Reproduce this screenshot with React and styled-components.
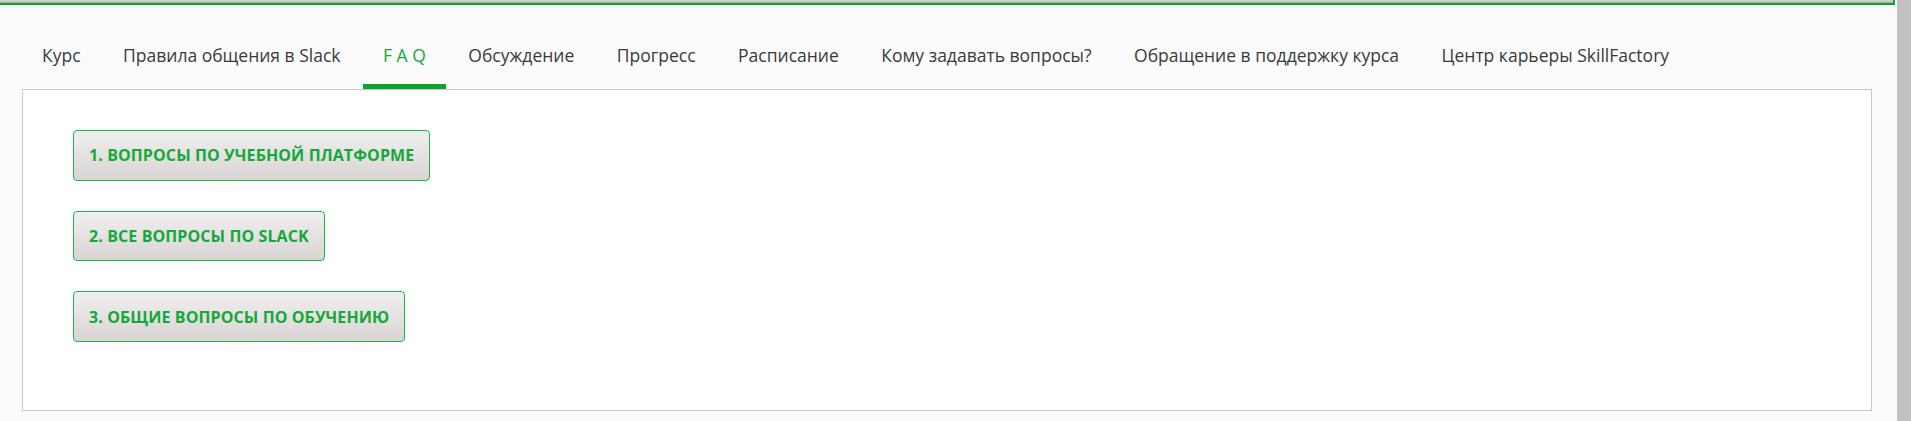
import React from 'react';
import styled, { createGlobalStyle } from 'styled-components';

const GlobalStyle = createGlobalStyle`
  html, body {
    margin: 0;
    padding: 0;
    background: #fbfbfb;
    font-family: "Open Sans", "Liberation Sans", sans-serif;
  }
`;

const tabs = [
  'Курс',
  'Правила общения в Slack',
  'F A Q',
  'Обсуждение',
  'Прогресс',
  'Расписание',
  'Кому задавать вопросы?',
  'Обращение в поддержку курса',
  'Центр карьеры SkillFactory',
];

const faq = [
  '1. Вопросы по учебной платформе',
  '2. Все вопросы по Slack',
  '3. Общие вопросы по обучению',
];

const App = () => {
  return (
    <Page>
      <GlobalStyle />
      <Main>
        <TopFrame />
        <Tabs>
          {tabs.map(tab => (
            <Tab key={tab} active={tab === 'F A Q'}>{tab}</Tab>
          ))}
        </Tabs>
        <Panel>
          {faq.map(item => (
            <FaqButton key={item}>{item}</FaqButton>
          ))}
        </Panel>
      </Main>
      <Scrollbar />
    </Page>
  );
};

export default App;

const Page = styled.div`
  display: flex;
  height: 421px;
  overflow: hidden;
`;

const Main = styled.div`
  flex: 1;
  display: flex;
  flex-flow: column nowrap;
  margin-right: 2px;
`;

const TopFrame = styled.div`
  height: 3px;
  background: linear-gradient(to bottom, #d8d8d8, #a9a9a9);
  border-bottom: 2px solid #0aa52c;
  border-right: 2px solid #0aa52c;
`;

const Tabs = styled.div`
  display: flex;
  align-items: flex-end;
  height: 84px;
  padding-left: 22px;
`;

const Tab = styled.div`
  padding: 0 20px 17px;
  margin-right: 2.5px;
  font-size: 17.5px;
  line-height: 24px;
  white-space: nowrap;
  color: ${p => (p.active ? '#14a83b' : '#3a3a3a')};
  border-bottom: 5px solid ${p => (p.active ? '#0aa52c' : 'transparent')};
  cursor: pointer;
`;

const Panel = styled.div`
  display: flex;
  flex-flow: column nowrap;
  align-items: flex-start;
  gap: 30px;
  margin: 0 23px 0 22px;
  padding: 40px 50px 68px;
  height: 322px;
  box-sizing: border-box;
  background: #fff;
  border: 1px solid #c8c8c8;
`;

const FaqButton = styled.div`
  height: 51px;
  box-sizing: border-box;
  display: flex;
  align-items: center;
  padding: 0 15px;
  border: 1px solid #1db548;
  border-radius: 4px;
  background: linear-gradient(to bottom, #f0efef, #dad4d4);
  color: #14a83b;
  font-weight: 700;
  font-size: 16px;
  letter-spacing: 0.1px;
  text-transform: uppercase;
  white-space: nowrap;
  cursor: pointer;
`;

const Scrollbar = styled.div`
  width: 14px;
  background: #c1c1c1;
`;
